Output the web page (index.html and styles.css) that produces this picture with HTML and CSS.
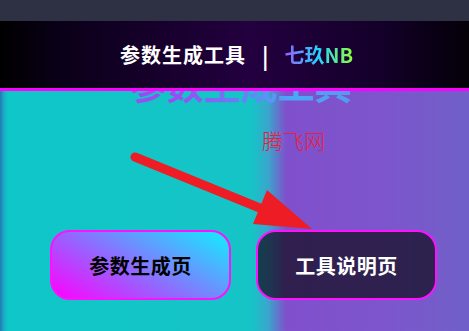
FILE: index.html
```html
<!DOCTYPE html>
<html lang="zh-CN">
<head>
<meta charset="utf-8">
<link rel="stylesheet" href="styles.css">
</head>
<body>
<div class="topbar"></div>
<div class="page">
  <header class="header">
    <span class="brand">参数生成工具</span>
    <span class="sep">|</span>
    <span class="author">七玖NB</span>
  </header>
  <main class="content">
    <h1 class="title">参数生成工具</h1>
    <div class="mark">腾飞网</div>
    <div class="actions">
      <button class="btn btn-gen">参数生成页</button>
      <button class="btn btn-doc">工具说明页</button>
    </div>
  </main>
  <svg class="arrow" width="469" height="310" viewBox="0 21 469 310">
    <line x1="135" y1="157" x2="272" y2="213" stroke="#ee1c25" stroke-width="9" stroke-linecap="round"/>
    <polygon points="253,224 267,190 312,229" fill="#ee1c25"/>
  </svg>
</div>
</body>
</html>
```
FILE: styles.css
```css
* { box-sizing: border-box; }
html, body { margin: 0; padding: 0; }
body {
  width: 469px;
  height: 331px;
  overflow: hidden;
  font-family: "Noto Sans CJK SC", "Noto Sans", sans-serif;
  background: #2e3044;
}
.topbar {
  height: 21px;
  background: #2e3044;
}
.page {
  position: relative;
  height: 310px;
  background: linear-gradient(90deg, #2578b4 0, #1aaec2 4px, #0fc6c8 8px, #16c4c6 252px, #3aa6cc 268px, #8050cc 286px, #7d55cc 380px, #7060c8 469px);
  overflow: hidden;
}
.header {
  position: absolute;
  left: 0;
  top: 0;
  width: 469px;
  height: 70px;
  background: linear-gradient(90deg, #000000 0, #0a0018 60px, #23003f 250px, #14002a 380px, #040008 469px);
  border-bottom: 3px solid #ff00ff;
  display: flex;
  align-items: center;
  justify-content: center;
  gap: 16px;
  padding-left: 4px;
  color: #ffffff;
  font-weight: 700;
  font-size: 20px;
  z-index: 2;
}
.brand { letter-spacing: 1px; }
.sep { font-weight: 700; font-size: 22px; }
.author {
  background: linear-gradient(90deg, #9a5cff, #21d4ff 50%, #8dff3a);
  -webkit-background-clip: text;
  background-clip: text;
  color: transparent;
}
.content {
  display: flex;
  flex-direction: column;
  padding-top: 43px;
}
.title {
  margin: 0;
  text-align: center;
  font-size: 37px;
  line-height: 40px;
  font-weight: 700;
  padding-left: 12px;
  background: linear-gradient(90deg, #9a4cf2 25%, #6a7cf4 50%, #4aa8f8 75%, #5898f0);
  -webkit-background-clip: text;
  background-clip: text;
  color: transparent;
  align-self: center;
}
.mark {
  margin-top: 23px;
  padding-left: 262px;
  color: #e8203a;
  font-size: 21px;
  line-height: 26px;
  font-weight: 300;
}
.actions {
  display: flex;
  gap: 25px;
  margin-top: 77px;
  padding-left: 50px;
}
.btn {
  width: 181px;
  height: 70px;
  border: 2px solid #ff10ff;
  border-radius: 20px;
  font-family: inherit;
  font-size: 20px;
  font-weight: 700;
  letter-spacing: 0.5px;
}
.btn-gen {
  background: linear-gradient(30deg, #ff00ff 0%, #9a60ff 40%, #55a8ff 70%, #10f0ff 100%);
  color: #000000;
}
.btn-doc {
  background: rgba(16, 12, 30, 0.72);
  color: #ffffff;
}
.arrow {
  position: absolute;
  left: 0;
  top: 0;
  z-index: 1;
  pointer-events: none;
}
```
